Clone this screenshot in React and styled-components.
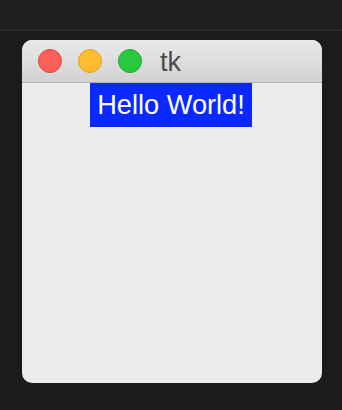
import React from "react";
import styled, { createGlobalStyle } from "styled-components";

const Global = createGlobalStyle`
  html, body { margin: 0; padding: 0; background: #1c1c1c; }
  body { width: 342px; height: 410px; overflow: hidden; font-family: "Liberation Sans", Arial, sans-serif; }
`;

const Screen = styled.div`
  width: 342px;
  height: 410px;
  background: #1b1b1b;
  display: flex;
  flex-direction: column;
`;

const TopBand = styled.div`
  height: 29px;
  background: #1e1e1e;
  border-bottom: 2px solid #2b2b2b;
`;

const Stage = styled.div`
  flex: 1;
  padding: 9px 20px 0 22px;
`;

const Window = styled.div`
  width: 300px;
  height: 343px;
  border-radius: 10px;
  overflow: hidden;
  background: #ececec;
  display: flex;
  flex-direction: column;
`;

const TitleBar = styled.div`
  height: 43px;
  box-sizing: border-box;
  background: linear-gradient(#e9e9e9, #d2d2d2);
  border-bottom: 1px solid #b1b1b1;
  display: flex;
  align-items: center;
  padding: 0 0 0 16px;
  gap: 16px;
`;

const Light = styled.span`
  width: 24px;
  height: 24px;
  box-sizing: border-box;
  border-radius: 50%;
  background: ${(p) => p.$fill};
  border: 1px solid ${(p) => p.$edge};
`;

const Title = styled.span`
  font-size: 27px;
  color: #4c4c4c;
  margin-left: 2px;
  line-height: 1;
  margin-top: 2px;
`;

const Content = styled.div`
  flex: 1;
  display: flex;
  justify-content: center;
  align-items: flex-start;
`;

const Label = styled.div`
  background: #0a28ff;
  color: #ffffff;
  font-size: 27.2px;
  height: 44px;
  display: flex;
  align-items: center;
  padding: 0 7px;
  margin-right: 2px;
`;

export default function App() {
  return (
    <>
      <Global />
      <Screen>
        <TopBand />
        <Stage>
          <Window>
            <TitleBar>
              <Light $fill="#fe5f57" $edge="#e0443e" />
              <Light $fill="#febc2e" $edge="#dea123" />
              <Light $fill="#28c840" $edge="#1aab29" />
              <Title>tk</Title>
            </TitleBar>
            <Content>
              <Label>Hello World!</Label>
            </Content>
          </Window>
        </Stage>
      </Screen>
    </>
  );
}
